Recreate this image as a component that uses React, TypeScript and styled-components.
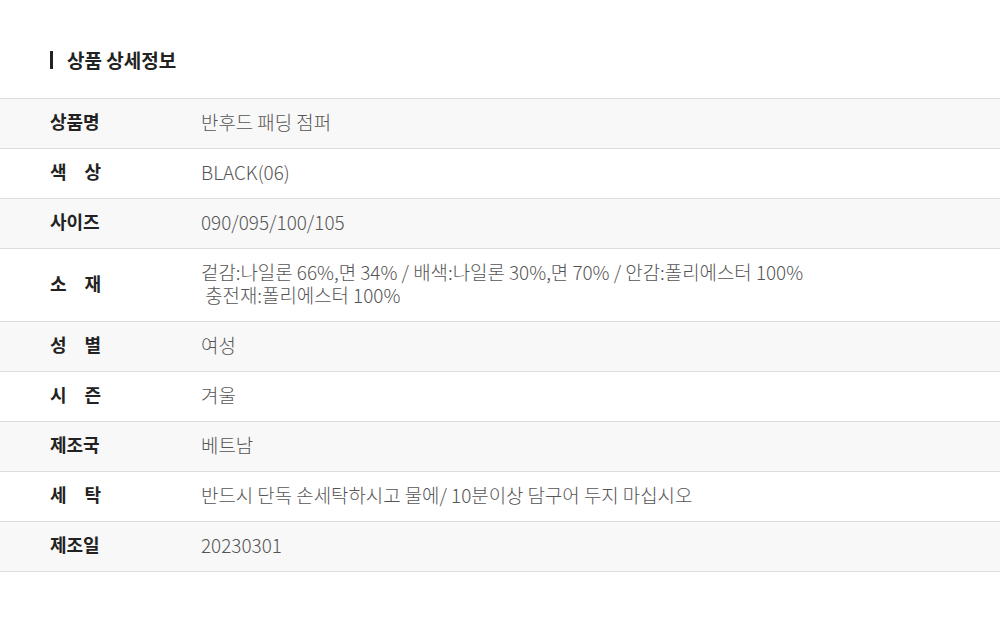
import React from "react";
import styled, { createGlobalStyle } from "styled-components";

const GlobalStyle = createGlobalStyle`
  body {
    margin: 0;
    background: #fff;
    font-family: "Noto Sans CJK KR", "Noto Sans", sans-serif;
  }
`;

const Section = styled.section`
  width: 1000px;
  padding-top: 48px;
`;

const Title = styled.h2`
  display: flex;
  align-items: center;
  margin: 0 0 26px 50px;
  font-size: 19px;
  font-weight: 700;
  color: #222;
  line-height: 24px;
  &::before {
    content: "";
    width: 3px;
    height: 18px;
    background: #222;
    margin-right: 14px;
  }
`;

const Table = styled.div`
  border-top: 1px solid #ddd;
`;

const Row = styled.div<{ $shade: boolean }>`
  display: flex;
  align-items: center;
  min-height: 50px;
  padding: 11px 0 15px;
  box-sizing: border-box;
  border-bottom: 1px solid #ddd;
  background: ${(p) => (p.$shade ? "#f8f8f8" : "#fff")};
`;

const Label = styled.div`
  display: flex;
  justify-content: space-between;
  width: 51px;
  margin-left: 50px;
  margin-right: 100px;
  font-size: 18px;
  font-weight: 700;
  color: #222;
  line-height: 23px;
  white-space: nowrap;
`;

const Value = styled.div`
  font-size: 18.9px;
  font-weight: 300;
  color: #555;
  line-height: 23px;
  white-space: pre;
`;

const rows: { label: string; value: string }[] = [
  { label: "상품명", value: "반후드 패딩 점퍼" },
  { label: "색상", value: "BLACK(06)" },
  { label: "사이즈", value: "090/095/100/105" },
  {
    label: "소재",
    value:
      "겉감:나일론 66%,면 34% / 배색:나일론 30%,면 70% / 안감:폴리에스터 100%\n 충전재:폴리에스터 100%",
  },
  { label: "성별", value: "여성" },
  { label: "시즌", value: "겨울" },
  { label: "제조국", value: "베트남" },
  { label: "세탁", value: "반드시 단독 손세탁하시고 물에/ 10분이상 담구어 두지 마십시오" },
  { label: "제조일", value: "20230301" },
];

export default function App() {
  return (
    <>
      <GlobalStyle />
      <Section>
        <Title>상품 상세정보</Title>
        <Table>
          {rows.map((row, index) => (
            <Row key={index} $shade={index % 2 === 0}>
              <Label>
                {row.label.length === 2
                  ? row.label.split("").map((ch, i) => <span key={i}>{ch}</span>)
                  : row.label}
              </Label>
              <Value>{row.value}</Value>
            </Row>
          ))}
        </Table>
      </Section>
    </>
  );
}
